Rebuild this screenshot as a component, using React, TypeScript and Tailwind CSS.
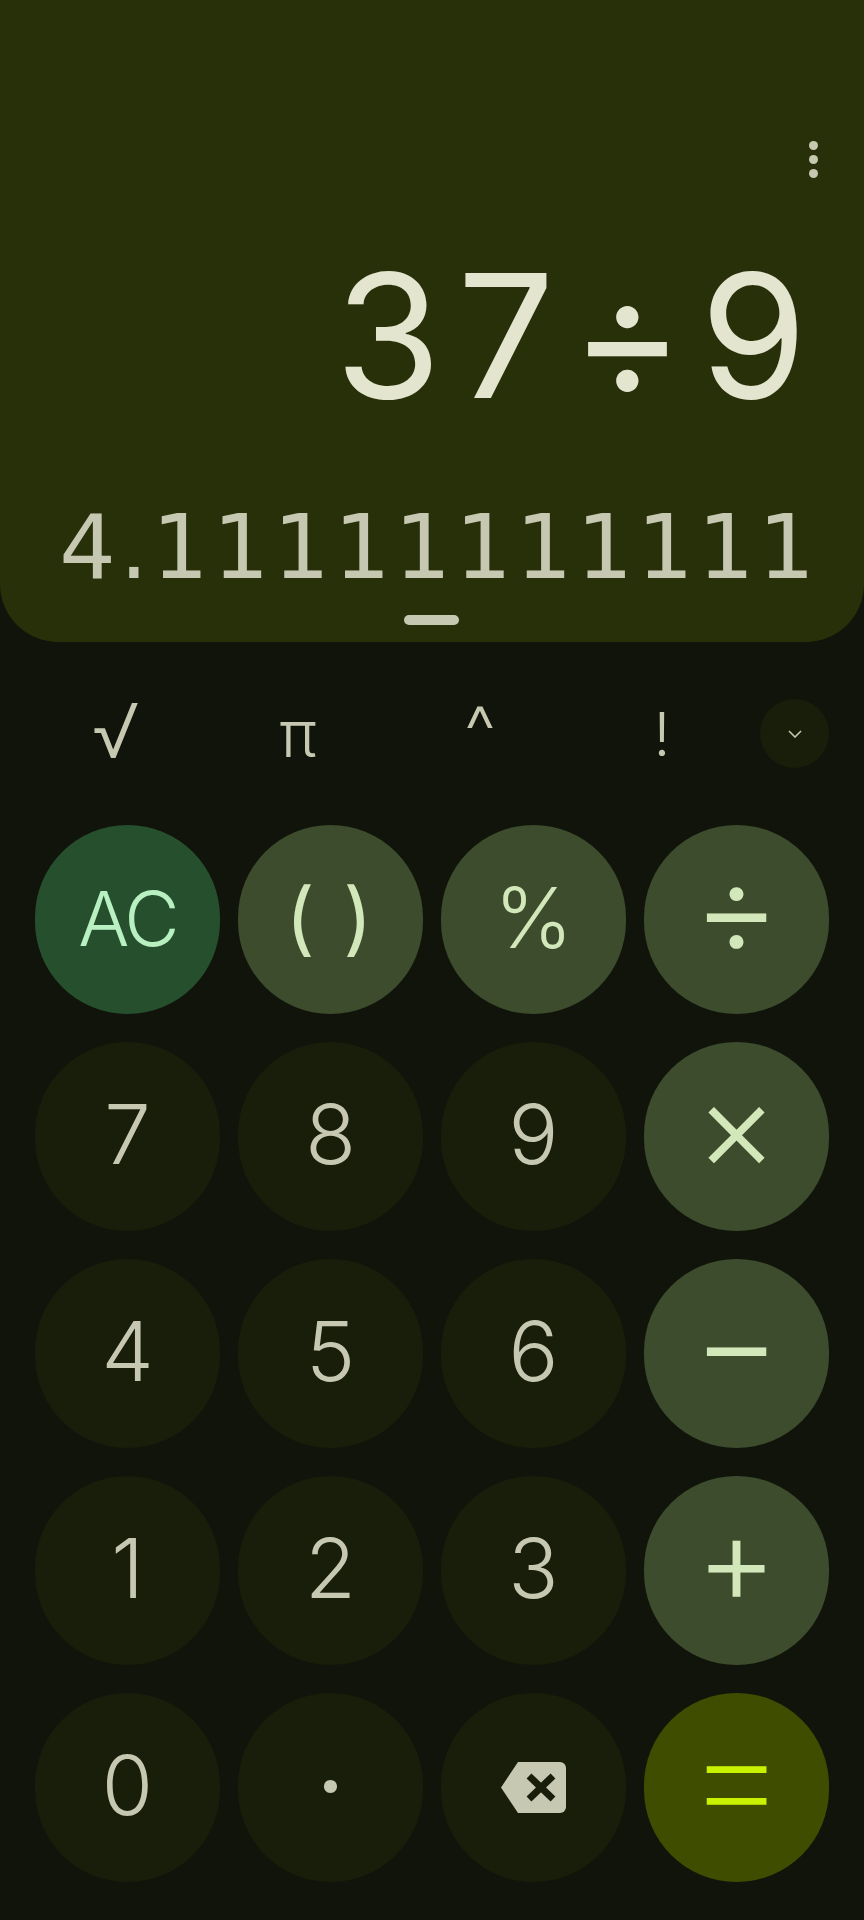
import React from "react";

const digitKey = "bg-[#191e0a] text-[#c6c8b2] text-[83px] font-[350] pb-[4px]";
const opKey = "bg-[#3c4c2c] text-[#d2e8ba] font-light";

// keypad, top to bottom
const keys: { label: string; cls: string; inner?: string }[] = [
  { label: "AC", cls: "bg-[#26502d] text-[#b9f0c2] text-[76px] font-[350] tracking-[-3px] pb-[4px]" },
  { label: "( )", cls: `${opKey} text-[80px] pb-[6px]`, inner: "tracking-[3px] font-normal" },
  { label: "%", cls: `${opKey} text-[84px] pb-[4px]` },
  { label: "÷", cls: `${opKey} text-[134px] pb-[25px]` },
  { label: "7", cls: digitKey },
  { label: "8", cls: digitKey },
  { label: "9", cls: digitKey },
  { label: "×", cls: `${opKey} text-[126px] pb-[24px]` },
  { label: "4", cls: digitKey },
  { label: "5", cls: digitKey },
  { label: "6", cls: digitKey },
  { label: "−", cls: `${opKey} text-[134px] pb-[25px]` },
  { label: "1", cls: digitKey },
  { label: "2", cls: digitKey },
  { label: "3", cls: digitKey },
  { label: "+", cls: `${opKey} text-[124px] pb-[24px]` },
  { label: "0", cls: digitKey },
  { label: "·", cls: `${digitKey} font-semibold` },
  { label: "back", cls: "bg-[#191e0a]" },
  { label: "=", cls: "bg-[#3f4d00] text-[#c9f200] text-[160px] font-extralight pb-[30px]" },
];

const BackspaceIcon = () => (
  <svg width="65" height="51" viewBox="0 0 65 51">
    <path d="M17 0H59a6 6 0 0 1 6 6V45a6 6 0 0 1-6 6H17L0 25.5Z" fill="#c6c8b2" />
    <path d="M28 14L52 37M52 14L28 37" stroke="#191e0a" strokeWidth="7" fill="none" />
  </svg>
);

export default function App() {
  return (
    <div className="w-[864px] h-[1920px] bg-[#11140a] overflow-hidden font-['Inter',sans-serif]">
      {/* display */}
      <div className="h-[642px] bg-[#283009] rounded-b-[58px] flex flex-col items-end">
        <div className="flex flex-col gap-[5px] mt-[141px] mr-[46px]">
          <span className="w-[9px] h-[9px] rounded-full bg-[#c6c8b2]" />
          <span className="w-[9px] h-[9px] rounded-full bg-[#c6c8b2]" />
          <span className="w-[9px] h-[9px] rounded-full bg-[#c6c8b2]" />
        </div>
        <div className="mt-[57px] mr-[41px] h-[200px] leading-[200px] text-[172px] font-normal tracking-[16px] text-[#e3e5ce]">
          37÷9
        </div>
        <div className="mt-[62px] mr-[45px] h-[100px] leading-[100px] text-[89px] tracking-[4px] text-[#c6c8b2] font-['DejaVu_Sans',sans-serif]">
          4.11111111111
        </div>
        <div className="mt-[18px] mr-[405px] w-[55px] h-[10px] rounded-full bg-[#c6c8b2]" />
      </div>

      {/* scientific row */}
      <div className="h-[183px] pl-[25px] flex items-center text-[#c6c8b2] font-light">
        <span className="w-[182px] text-center text-[76px] leading-none pb-[8px]">√</span>
        <span className="w-[182px] text-center text-[64px] leading-none">π</span>
        <span className="w-[182px] text-center text-[70px] leading-none pb-[6px]">^</span>
        <span className="w-[182px] text-center text-[60px] leading-none">!</span>
        <div className="ml-[7px] w-[69px] h-[69px] rounded-full bg-[#191e0a] flex items-center justify-center">
          <svg width="14" height="8" viewBox="0 0 14 8">
            <path d="M1 1l6 6 6-6" stroke="#c6c8b2" strokeWidth="1.6" fill="none" />
          </svg>
        </div>
      </div>

      {/* keys */}
      <div className="grid grid-cols-[repeat(4,185px)] auto-rows-[189px] gap-x-[18px] gap-y-[28px] pl-[35px]">
        {keys.map((k) => (
          <div key={k.label} className={`rounded-full flex items-center justify-center leading-none ${k.cls}`}>
            {k.label === "back" ? <BackspaceIcon /> : <span className={k.inner}>{k.label}</span>}
          </div>
        ))}
      </div>
    </div>
  );
}
